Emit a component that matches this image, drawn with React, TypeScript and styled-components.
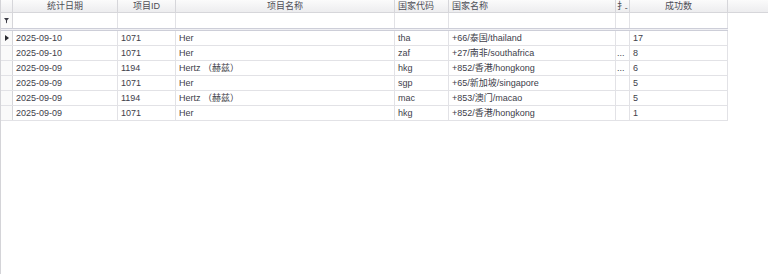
import React from 'react'
import styled, { createGlobalStyle } from 'styled-components'

const GlobalStyle = createGlobalStyle`
    html, body {
        margin: 0;
        padding: 0;
        background: #fff;
    }
    body {
        font-family: "Liberation Sans", "Noto Sans CJK SC", sans-serif;
        font-size: 9px;
        color: #40404a;
    }
`

type Col = { key: string; title: string; width: number; align: 'left' | 'center' }

const columns: Col[] = [
    { key: 'date', title: '统计日期', width: 105, align: 'center' },
    { key: 'id', title: '项目ID', width: 58, align: 'center' },
    { key: 'name', title: '项目名称', width: 219, align: 'center' },
    { key: 'code', title: '国家代码', width: 54, align: 'left' },
    { key: 'country', title: '国家名称', width: 167, align: 'left' },
    { key: 'sort', title: '扌..', width: 14, align: 'left' },
    { key: 'ok', title: '成功数', width: 98, align: 'center' },
]

const rows = [
    { date: '2025-09-10', id: '1071', name: 'Her', code: 'tha', country: '+66/泰国/thailand', sort: '', ok: '17' },
    { date: '2025-09-10', id: '1071', name: 'Her', code: 'zaf', country: '+27/南非/southafrica', sort: '...', ok: '8' },
    { date: '2025-09-09', id: '1194', name: 'Hertz （赫兹）', code: 'hkg', country: '+852/香港/hongkong', sort: '...', ok: '6' },
    { date: '2025-09-09', id: '1071', name: 'Her', code: 'sgp', country: '+65/新加坡/singapore', sort: '', ok: '5' },
    { date: '2025-09-09', id: '1194', name: 'Hertz （赫兹）', code: 'mac', country: '+853/澳门/macao', sort: '', ok: '5' },
    { date: '2025-09-09', id: '1071', name: 'Her', code: 'hkg', country: '+852/香港/hongkong', sort: '', ok: '1' },
]

const template = `12px ${columns.map(c => c.width + 'px').join(' ')}`

const FunnelIcon = () => (
    <svg width="5" height="6" viewBox="0 0 5 6">
        <path d="M0 0H5L3 2.5V4.5L2 5.5V2.5Z" fill="#3a3a44" />
    </svg>
)

const RowArrow = () => (
    <svg width="4" height="6" viewBox="0 0 4 6">
        <path d="M0 0L4 3L0 6Z" fill="#2a2a30" />
    </svg>
)

const App: React.FC = () => {
    return (
        <Page>
            <GlobalStyle />
            <HeaderBar>
                <HeaderRow>
                    <HeaderCell align="center" />
                    {columns.map(c => (
                        <HeaderCell key={c.key} align={c.align} narrow={c.width < 20}>
                            {c.title}
                        </HeaderCell>
                    ))}
                </HeaderRow>
            </HeaderBar>
            <Grid>
                <FilterRow>
                    <IndicatorCell>
                        <FunnelIcon />
                    </IndicatorCell>
                    {columns.map(c => (
                        <Cell key={c.key} />
                    ))}
                </FilterRow>
                <Separator />
                {rows.map((r, i) => (
                    <DataRow key={i}>
                        <IndicatorCell>{i === 0 && <RowArrow />}</IndicatorCell>
                        {columns.map(c => (
                            <Cell key={c.key} narrow={c.width < 20}>
                                {r[c.key as keyof typeof r]}
                            </Cell>
                        ))}
                    </DataRow>
                ))}
            </Grid>
        </Page>
    )
}

const Page = styled.div`
    width: 768px;
    height: 274px;
    box-sizing: border-box;
    border-left: 1px solid #d4d4d8;
    overflow: hidden;
`

const HeaderBar = styled.div`
    height: 13px;
    box-sizing: border-box;
    background: linear-gradient(#fbfbfb, #ededef);
    border-bottom: 1px solid #d6d6da;
`

const HeaderRow = styled.div`
    display: grid;
    grid-template-columns: ${template};
    height: 12px;
`

const HeaderCell = styled.div<{ align: 'left' | 'center'; narrow?: boolean }>`
    box-sizing: border-box;
    border-right: 1px solid #d6d6da;
    padding: 0 ${p => (p.narrow ? '0 0 1px' : '3px')};
    letter-spacing: ${p => (p.narrow ? '-1.5px' : 'normal')};
    line-height: 12px;
    color: #4e4e56;
    text-align: ${p => p.align};
    white-space: nowrap;
    overflow: hidden;
`

const Grid = styled.div`
    width: 727px;
`

const FilterRow = styled.div`
    display: grid;
    grid-template-columns: ${template};
    height: 15px;
`

const Separator = styled.div`
    height: 3px;
    box-sizing: border-box;
    border-top: 1px solid #cdced8;
    border-bottom: 1px solid #cdced8;
    background: #f0f0f4;
`

const DataRow = styled.div`
    display: grid;
    grid-template-columns: ${template};
    height: 15px;
    box-sizing: border-box;
    border-bottom: 1px solid #e2e2e6;
`

const Cell = styled.div<{ narrow?: boolean }>`
    box-sizing: border-box;
    border-right: 1px solid #e2e2e6;
    padding: 0 ${p => (p.narrow ? '1px' : '3px')};
    line-height: 14px;
    white-space: nowrap;
    overflow: hidden;
    color: #40404a;
`

const IndicatorCell = styled.div`
    box-sizing: border-box;
    border-right: 1px solid #d6d6da;
    display: flex;
    align-items: center;
    justify-content: center;
    background: #fafafa;
`

export default App
